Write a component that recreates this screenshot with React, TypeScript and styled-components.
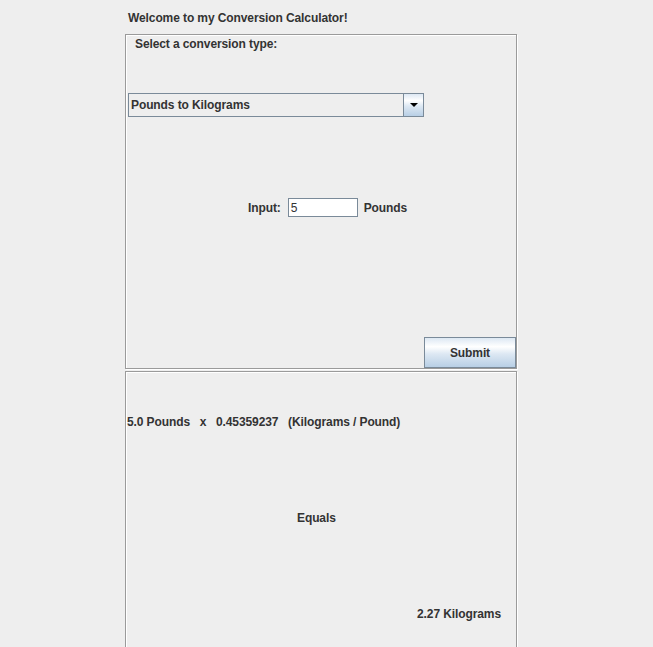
import React from "react";
import styled, { createGlobalStyle } from "styled-components";

const Global = createGlobalStyle`
  html, body { margin: 0; padding: 0; background: #eeeeee; }
  body { font-family: "Liberation Sans", Arial, sans-serif; }
`;

const Frame = styled.div`
  width: 653px;
  height: 647px;
  overflow: hidden;
  background: #eeeeee;
  display: flex;
  align-items: flex-start;
  padding-left: 125px;
  box-sizing: border-box;
`;

const Column = styled.div`
  width: 392px;
  display: flex;
  flex-direction: column;
`;

const Label = styled.div<{ $plain?: boolean }>`
  font-size: 12px;
  line-height: 14px;
  letter-spacing: -0.1px;
  font-weight: ${(p) => (p.$plain ? 400 : 700)};
  color: #333333;
  white-space: pre;
  flex-shrink: 0;
`;

const Title = styled(Label)`
  height: 34px;
  box-sizing: border-box;
  padding: 11px 0 0 3px;
`;

const EtchedPanel = styled.div<{ $height: number }>`
  height: ${(p) => p.$height}px;
  flex-shrink: 0;
  box-sizing: border-box;
  border: 1px solid #9a9a9a;
  box-shadow: inset 1px 1px 0 #ffffff, 1px 1px 0 #ffffff;
  display: flex;
  flex-direction: column;
`;

const SecondPanel = styled(EtchedPanel)`
  margin-top: 2px;
`;

const PromptLabel = styled(Label)`
  margin: 2px 0 0 9px;
`;

const Combo = styled.div`
  margin: 42px 0 0 2px;
  width: 296px;
  height: 24px;
  flex-shrink: 0;
  box-sizing: border-box;
  border: 1px solid #7a8a99;
  background: #eeeeee;
  display: flex;
  align-items: stretch;
`;

const ComboText = styled(Label)`
  flex: 1;
  padding-left: 2px;
  display: flex;
  align-items: center;
`;

const ArrowButton = styled.div`
  width: 19px;
  border-left: 1px solid #7a8a99;
  background: linear-gradient(
    to bottom,
    #dde8f3 0%,
    #ffffff 30%,
    #dde8f3 55%,
    #b8cfe5 100%
  );
  display: flex;
  align-items: center;
  justify-content: center;
`;

const Triangle = styled.div`
  width: 0;
  height: 0;
  border-left: 4px solid transparent;
  border-right: 4px solid transparent;
  border-top: 4px solid #000000;
`;

const InputRow = styled.div`
  margin: 81px 0 0 122px;
  display: flex;
  align-items: center;
  height: 19px;
  flex-shrink: 0;
`;

const TextField = styled.div`
  width: 70px;
  height: 19px;
  box-sizing: border-box;
  margin: 0 6px 0 7px;
  border: 1px solid #7a8a99;
  background: #ffffff;
  padding-left: 2px;
  display: flex;
  align-items: center;
  font-size: 12px;
  color: #333333;
`;

const SubmitButton = styled.div`
  margin-top: auto;
  align-self: flex-end;
  width: 92px;
  height: 31px;
  flex-shrink: 0;
  box-sizing: border-box;
  border: 1px solid #7a8a99;
  background: linear-gradient(
    to bottom,
    #dde8f3 0%,
    #ffffff 30%,
    #dde8f3 55%,
    #b8cfe5 100%
  );
  display: flex;
  align-items: center;
  justify-content: center;
  font-size: 12px;
  letter-spacing: -0.1px;
  font-weight: 700;
  color: #333333;
`;

const Formula = styled(Label)`
  margin: 43px 0 0 1px;
`;

const EqualsLabel = styled(Label)`
  margin: 82px 0 0 171px;
`;

const ResultLabel = styled(Label)`
  margin: 82px 15px 0 0;
  align-self: flex-end;
`;

export default function App() {
  return (
    <>
      <Global />
      <Frame>
        <Column>
          <Title>Welcome to my Conversion Calculator!</Title>
          <EtchedPanel $height={335}>
            <PromptLabel>Select a conversion type:</PromptLabel>
            <Combo>
              <ComboText>Pounds to Kilograms</ComboText>
              <ArrowButton>
                <Triangle />
              </ArrowButton>
            </Combo>
            <InputRow>
              <Label>Input:</Label>
              <TextField>5</TextField>
              <Label>Pounds</Label>
            </InputRow>
            <SubmitButton>Submit</SubmitButton>
          </EtchedPanel>
          <SecondPanel $height={300}>
            <Formula>{"5.0 Pounds   x   0.45359237   (Kilograms / Pound)"}</Formula>
            <EqualsLabel>Equals</EqualsLabel>
            <ResultLabel>2.27 Kilograms</ResultLabel>
          </SecondPanel>
        </Column>
      </Frame>
    </>
  );
}
